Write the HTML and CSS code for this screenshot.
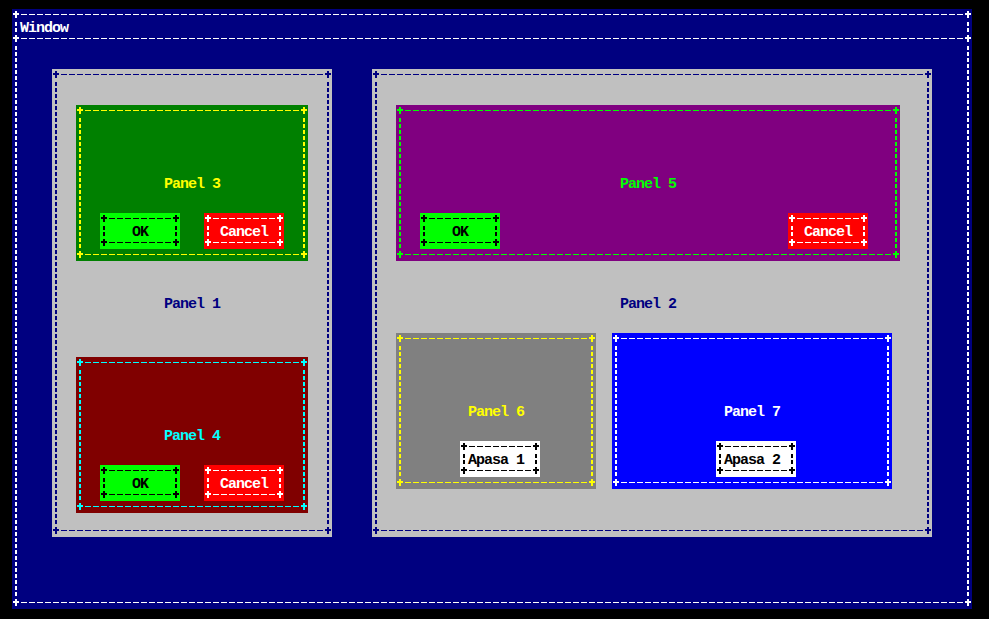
FILE: index.html
```html
<!DOCTYPE html>
<html>
<head>
<meta charset="utf-8">
<title>Window</title>
<link rel="stylesheet" href="styles.css">
</head>
<body>
<div class="window">
  <div class="titlebar frame"><span class="title">Window</span></div>
  <div class="winbody frame"></div>

  <div class="panel p1 frame">
    <div class="panel p3 frame">
      <span class="label lbl-p3">Panel 3</span>
      <div class="btn ok frame pos-ok">OK</div>
      <div class="btn cancel frame pos-cancel">Cancel</div>
    </div>
    <span class="label lbl-p1">Panel 1</span>
    <div class="panel p4 frame">
      <span class="label lbl-p3">Panel 4</span>
      <div class="btn ok frame pos-ok">OK</div>
      <div class="btn cancel frame pos-cancel">Cancel</div>
    </div>
  </div>

  <div class="panel p2 frame">
    <div class="panel p5 frame">
      <span class="label lbl-p5">Panel 5</span>
      <div class="btn ok frame pos-ok">OK</div>
      <div class="btn cancel frame pos-cancel5">Cancel</div>
    </div>
    <span class="label lbl-p2">Panel 2</span>
    <div class="panel p6 frame">
      <span class="label lbl-p6">Panel 6</span>
      <div class="btn apasa frame pos-a1">Apasa 1</div>
    </div>
    <div class="panel p7 frame">
      <span class="label lbl-p7">Panel 7</span>
      <div class="btn apasa frame pos-a2">Apasa 2</div>
    </div>
  </div>
</div>
</body>
</html>
```
FILE: styles.css
```css
* {
  box-sizing: border-box;
  margin: 0;
  padding: 0;
}

html, body {
  background: #000;
}

body {
  padding: 9px 0 0 12px;
  font-family: "Liberation Mono", "DejaVu Sans Mono", monospace;
  font-weight: bold;
  font-size: 15px;
  line-height: 12px;
  letter-spacing: -1px;
}

.label,
.btn,
.title {
  white-space: nowrap;
}

/* ---------- character-cell frame ---------- */
.frame {
  position: relative;
}

.frame::before,
.frame::after {
  content: "";
  position: absolute;
  inset: 0;
  pointer-events: none;
}

.frame::before {
  background:
    repeating-linear-gradient(to right, transparent 0 1px, var(--fc) 1px 7px, transparent 7px 8px) left 8px top 5px / calc(100% - 16px) 1px no-repeat,
    repeating-linear-gradient(to right, transparent 0 1px, var(--fc) 1px 7px, transparent 7px 8px) left 8px bottom 6px / calc(100% - 16px) 1px no-repeat,
    repeating-linear-gradient(to bottom, transparent 0 1px, var(--fc) 1px 5px, transparent 5px 6px) left 3px top 12px / 2px calc(100% - 24px) no-repeat,
    repeating-linear-gradient(to bottom, transparent 0 1px, var(--fc) 1px 5px, transparent 5px 6px) right 3px top 12px / 2px calc(100% - 24px) no-repeat;
}

.frame::after {
  background:
    linear-gradient(var(--fc), var(--fc)) left 3px top 2px / 2px 7px no-repeat,
    linear-gradient(var(--fc), var(--fc)) left 1px top 4px / 6px 2px no-repeat,
    linear-gradient(var(--fc), var(--fc)) right 3px top 2px / 2px 7px no-repeat,
    linear-gradient(var(--fc), var(--fc)) right 1px top 4px / 6px 2px no-repeat,
    linear-gradient(var(--fc), var(--fc)) left 3px bottom 3px / 2px 7px no-repeat,
    linear-gradient(var(--fc), var(--fc)) left 1px bottom 6px / 6px 2px no-repeat,
    linear-gradient(var(--fc), var(--fc)) right 3px bottom 3px / 2px 7px no-repeat,
    linear-gradient(var(--fc), var(--fc)) right 1px bottom 6px / 6px 2px no-repeat;
}

/* ---------- window ---------- */
.window {
  display: grid;
  grid-template-columns: repeat(120, 8px);
  grid-template-rows: repeat(50, 12px);
  width: 960px;
  height: 600px;
  background: #000080;
  color: #fff;
  --fc: #fff;
}

.titlebar {
  grid-column: 1 / -1;
  grid-row: 1 / 4;
  padding: 14px 8px 0;
  --fc: #fff;
}

.winbody {
  grid-column: 1 / -1;
  grid-row: 3 / 51;
  --fc: #fff;
}

/* ---------- panels ---------- */
.panel {
  display: grid;
  grid-auto-columns: 8px;
  grid-auto-rows: 12px;
}

.p1 {
  grid-column: 6 / span 35;
  grid-row: 6 / span 39;
  background: #c0c0c0;
  color: #000080;
  --fc: #000080;
}

.p2 {
  grid-column: 46 / span 70;
  grid-row: 6 / span 39;
  background: #c0c0c0;
  color: #000080;
  --fc: #000080;
}

.p3 {
  grid-column: 4 / span 29;
  grid-row: 4 / span 13;
  background: #008000;
  color: #ffff00;
  --fc: #ffff00;
}

.p4 {
  grid-column: 4 / span 29;
  grid-row: 25 / span 13;
  background: #800000;
  color: #00ffff;
  --fc: #00ffff;
}

.p5 {
  grid-column: 4 / span 63;
  grid-row: 4 / span 13;
  background: #800080;
  color: #00ff00;
  --fc: #00ff00;
}

.p6 {
  grid-column: 4 / span 25;
  grid-row: 23 / span 13;
  background: #808080;
  color: #ffff00;
  --fc: #ffff00;
}

.p7 {
  grid-column: 31 / span 35;
  grid-row: 23 / span 13;
  background: #0000ff;
  color: #fff;
  --fc: #fff;
}

/* ---------- labels ---------- */
.label {
  grid-row: 7;
  padding-top: 2px;
}

.lbl-p1 { grid-column: 15 / span 7; grid-row: 20; }
.lbl-p2 { grid-column: 32 / span 7; grid-row: 20; }
.lbl-p3 { grid-column: 12 / span 7; }
.lbl-p5 { grid-column: 29 / span 7; }
.lbl-p6 { grid-column: 10 / span 7; }
.lbl-p7 { grid-column: 15 / span 7; }

/* ---------- buttons ---------- */
.btn {
  padding-top: 14px;
  grid-row: 10 / span 3;
}

.ok {
  background: #00ff00;
  color: #000;
  --fc: #000;
  padding-left: 32px;
}

.cancel {
  background: #ff0000;
  color: #fff;
  --fc: #fff;
  padding-left: 16px;
}

.apasa {
  background: #fff;
  color: #000;
  --fc: #000;
  padding-left: 8px;
}

.pos-ok { grid-column: 4 / span 10; }
.pos-cancel { grid-column: 17 / span 10; }
.pos-cancel5 { grid-column: 50 / span 10; }
.pos-a1 { grid-column: 9 / span 10; }
.pos-a2 { grid-column: 14 / span 10; }
```
